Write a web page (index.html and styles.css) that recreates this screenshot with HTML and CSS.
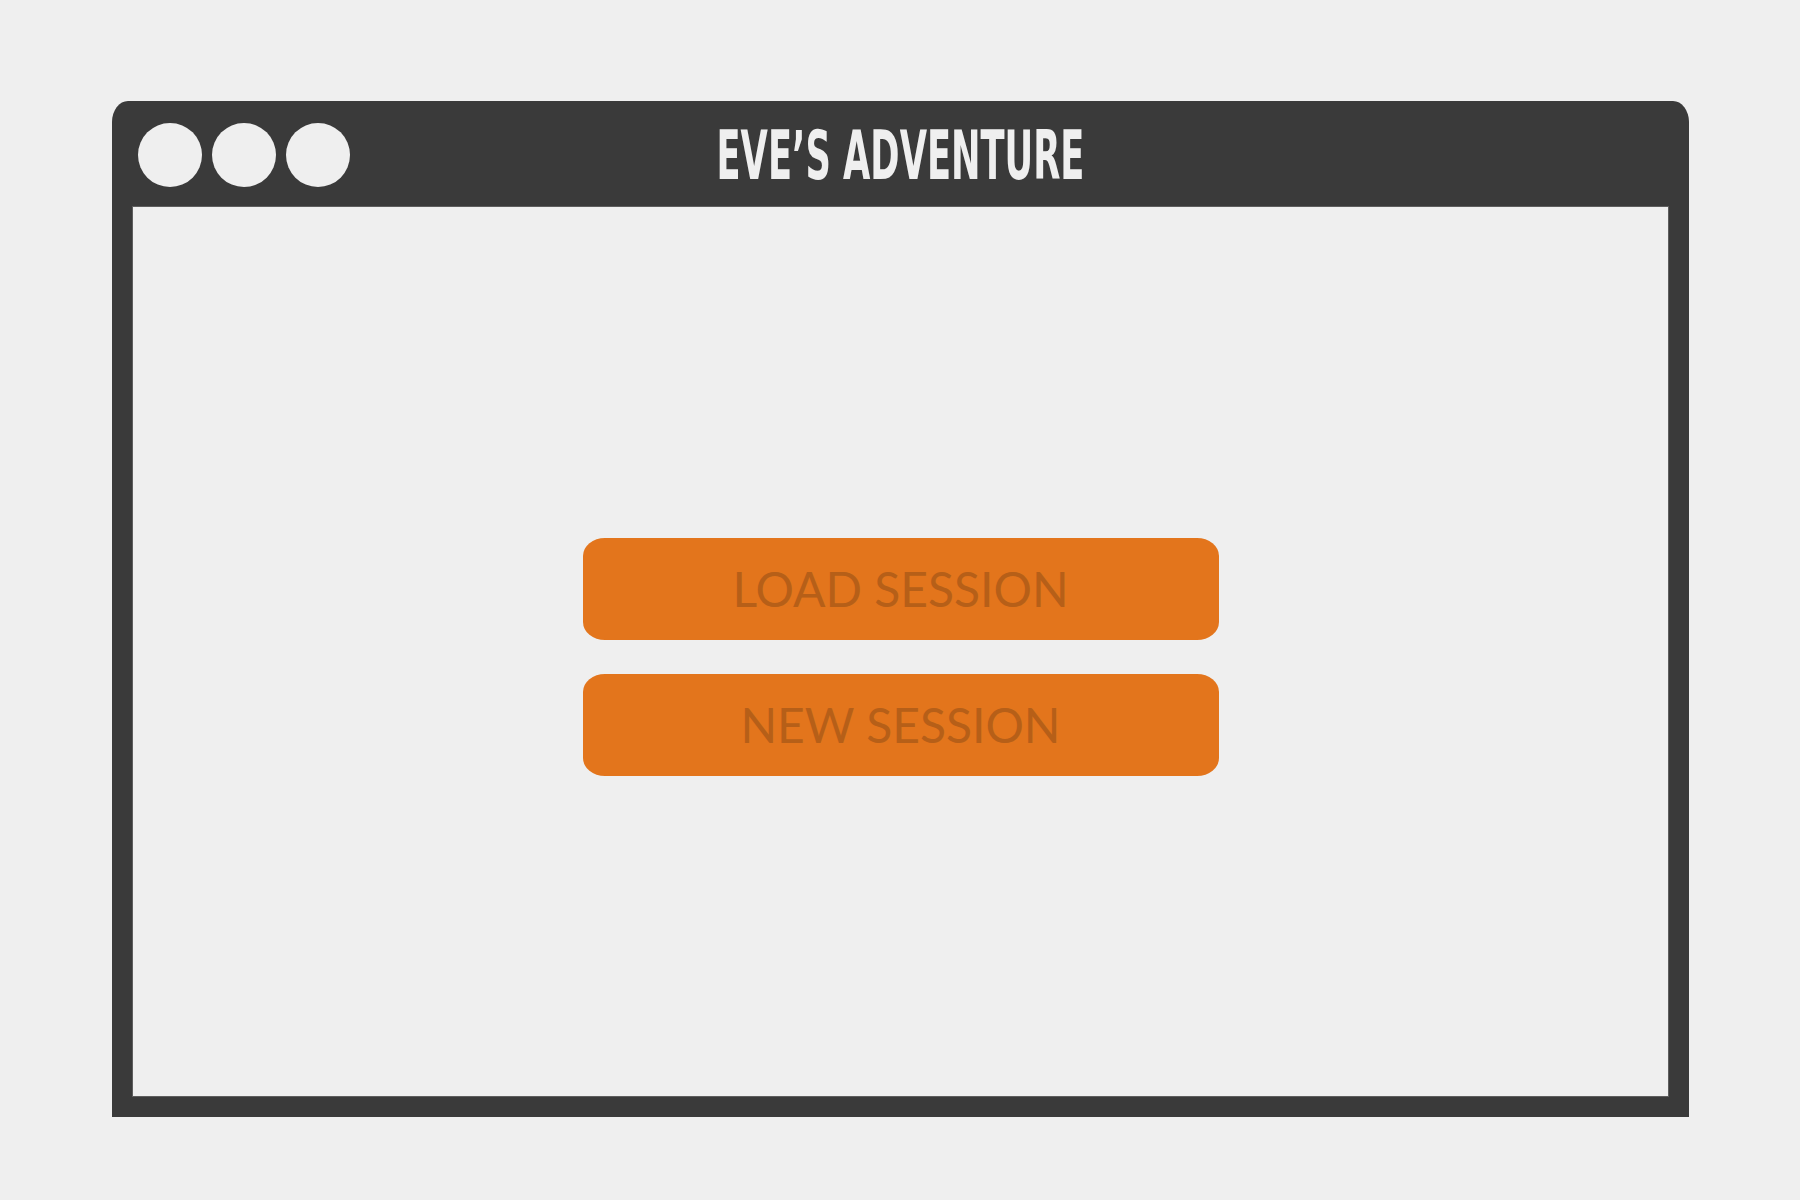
FILE: index.html
```html
<!DOCTYPE html>
<html>
<head>
<meta charset="utf-8">
<link rel="stylesheet" href="styles.css">
</head>
<body>
<div class="window">
  <div class="titlebar">
    <div class="dots">
      <span class="dot"></span>
      <span class="dot"></span>
      <span class="dot"></span>
    </div>
    <div class="title"><span class="title-text">EVE’S ADVENTURE</span></div>
    <div class="spacer"></div>
  </div>
  <div class="frame">
    <div class="content">
      <button class="btn"><span class="btn-text">LOAD SESSION</span></button>
      <button class="btn"><span class="btn-text">NEW SESSION</span></button>
    </div>
  </div>
</div>
</body>
</html>
```
FILE: styles.css
```css
html, body {
  margin: 0;
  background: #efefef;
}
body {
  padding: 101px 0 0 112px;
  width: 1800px;
  height: 1200px;
  box-sizing: border-box;
  overflow: hidden;
}
.window {
  width: 1577px;
  height: 1016px;
  display: flex;
  flex-direction: column;
  background: #3a3a3a;
  border-radius: 16px 16px 0 0 / 21px 21px 0 0;
}
.titlebar {
  height: 106px;
  display: grid;
  grid-template-columns: 1fr auto 1fr;
  align-items: center;
  padding: 0 26px;
  flex: none;
}
.dots {
  display: flex;
  gap: 10px;
  padding-top: 1px;
}
.dot {
  width: 64px;
  height: 64px;
  border-radius: 50%;
  background: #efefef;
}
.title {
  color: #efefef;
  font-family: "DejaVu Sans Condensed", "DejaVu Sans", sans-serif;
  font-weight: bold;
  font-size: 67px;
  line-height: 1;
  text-align: center;
  padding-top: 5px;
}
.title-text {
  display: inline-block;
  transform: scaleX(0.585);
  white-space: nowrap;
}
.frame {
  flex: 1;
  padding: 0 21px 21px 21px;
  display: flex;
}
.content {
  flex: 1;
  background: #efefef;
  box-shadow: 0 0 0 1px #5e5e5e;
  display: flex;
  flex-direction: column;
  align-items: center;
  justify-content: center;
  gap: 34px;
  padding-top: 11px;
}
.btn {
  width: 636px;
  height: 102px;
  border: none;
  border-radius: 22px / 18px;
  background: #e3751c;
  color: #b65f18;
  font-family: "Lato", "DejaVu Sans", sans-serif;
  font-weight: 400;
  font-size: 48px;
  padding: 0;
  display: flex;
  align-items: center;
  justify-content: center;
}
.btn-text {
  display: inline-block;
  line-height: 1;
  white-space: nowrap;
}
```
